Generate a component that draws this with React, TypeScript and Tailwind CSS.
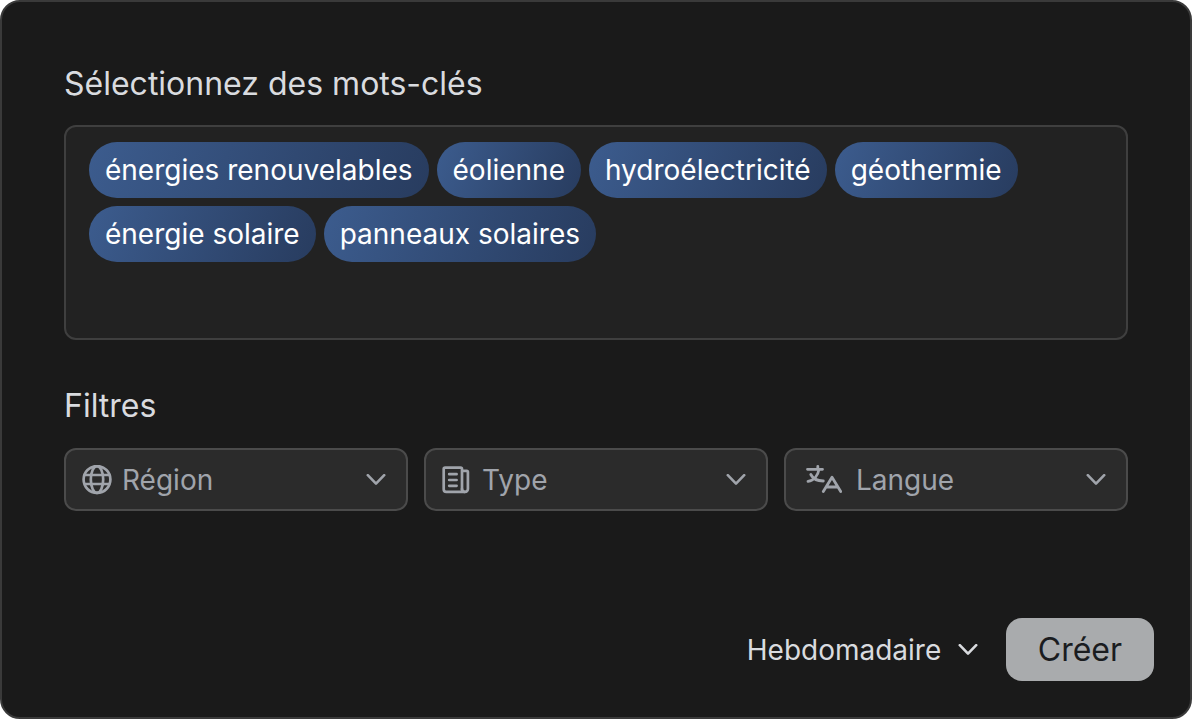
import { useState } from "react";
import type { ReactNode } from "react";

const KEYWORDS = [
  "énergies renouvelables",
  "éolienne",
  "hydroélectricité",
  "géothermie",
  "énergie solaire",
  "panneaux solaires",
];

function Chevron({ className }: { className: string }) {
  return (
    <svg
      className={className}
      width="20"
      height="12"
      viewBox="0 0 20 12"
      fill="none"
      stroke="currentColor"
      strokeWidth="2.6"
      strokeLinecap="round"
      strokeLinejoin="round"
      aria-hidden="true"
    >
      <path d="M1.8 1.2 L10 9.6 L18.2 1.2" />
    </svg>
  );
}

function GlobeIcon() {
  return (
    <svg width="30" height="30" viewBox="0 0 30 30" fill="none" stroke="currentColor" strokeWidth="2.7" aria-hidden="true">
      <circle cx="15" cy="14.5" r="13.4" />
      <ellipse cx="15" cy="14.5" rx="6.2" ry="13.4" />
      <path d="M2.4 10h25.2M2.4 19h25.2" />
    </svg>
  );
}

function NewsIcon() {
  return (
    <svg
      width="28"
      height="28"
      viewBox="0 0 28 28"
      fill="none"
      stroke="currentColor"
      strokeWidth="2.7"
      strokeLinecap="round"
      strokeLinejoin="round"
      aria-hidden="true"
    >
      <path d="M20 23.5V3.2a1.5 1.5 0 0 0-1.5-1.5H3.2a1.5 1.5 0 0 0-1.5 1.5v20a2.6 2.6 0 0 0 2.600 2.600h18.800a2.800 2.800 0 0 0 2.800-2.800V6a1.200 1.200 0 0 0-1.200-1.200H20" />
      <path d="M20 23c0 1.500.9 2.600 2.400 2.800" />
      <path d="M7.200 8.200h7.400M7.200 14h7.400M7.200 19.800h7.400" />
    </svg>
  );
}

function TranslateIcon() {
  return (
    <svg
      className="ml-1"
      width="36"
      height="30"
      viewBox="0 0 36 30"
      fill="none"
      stroke="currentColor"
      strokeWidth="2.8"
      strokeLinecap="round"
      strokeLinejoin="round"
      aria-hidden="true"
    >
      <path d="M1.5 4.300h15M11.800 1.500v2.800" />
      <path d="M13 4.300C12 10.500 8 15.500 2 16.300" />
      <path d="M4.800 9.500c2 4 6.500 6.500 12.500 6.500" />
      <path d="M17.300 26.500l8.700-14.300 8.700 14.300M21 22h10" />
    </svg>
  );
}

function FilterSelect({
  id,
  label,
  options,
  icon,
  padding,
}: {
  id: string;
  label: string;
  options: string[];
  icon: ReactNode;
  padding: string;
}) {
  return (
    <div className="relative min-w-0 flex-1 text-[#a0a4ab]">
      <select
        id={id}
        aria-label={label}
        className={`block h-[63px] w-full appearance-none rounded-xl border-2 border-[#4b4b4b] bg-[#2b2b2b] pr-12 text-[28px] outline-none ${padding}`}
      >
        <option>{label}</option>
        {options.map((option) => (
          <option key={option}>{option}</option>
        ))}
      </select>
      <span className="pointer-events-none absolute inset-y-0 left-[18px] flex items-center">{icon}</span>
      <Chevron className="pointer-events-none absolute top-1/2 right-[22px] -translate-y-1/2" />
    </div>
  );
}

export default function App() {
  const [draft, setDraft] = useState("");
  const [keywords, setKeywords] = useState(KEYWORDS);

  const addKeyword = () => {
    const word = draft.trim();
    if (word && !keywords.includes(word)) setKeywords([...keywords, word]);
    setDraft("");
  };

  return (
    <main className="min-h-screen bg-white pr-2 font-['Inter',sans-serif]">
      <form
        className="rounded-[20px] border-2 border-[#3a3a3a] bg-[#1a1a1a] pt-[61px] pb-9 text-[#d9dbdf]"
        onSubmit={(e) => e.preventDefault()}
      >
        <div className="px-[62px]">
          <label htmlFor="keyword" className="block text-[32px] leading-[42px]">
            Sélectionnez des mots-clés
          </label>
          <div className="mt-5 flex min-h-[215px] flex-wrap content-start gap-2 rounded-xl border-2 border-[#3f3f3f] bg-[#222222] px-[23px] py-[15px]">
            {keywords.map((word) => (
              <span
                key={word}
                className="rounded-full bg-linear-110 from-[#3c5c8e] to-[#283c5f] px-4 text-[28px] leading-14 text-white"
              >
                {word}
              </span>
            ))}
            <input
              id="keyword"
              className="h-14 min-w-20 flex-1 bg-transparent px-2 text-[28px] text-white outline-none"
              value={draft}
              onChange={(e) => setDraft(e.target.value)}
              onKeyDown={(e) => e.key === "Enter" && addKeyword()}
            />
          </div>

          <h2 className="mt-[42px] text-[32px] leading-12">Filtres</h2>
          <div className="mt-[18px] flex gap-4">
            <FilterSelect
              id="region"
              label="Région"
              options={["Europe", "Amérique", "Afrique", "Asie"]}
              icon={<GlobeIcon />}
              padding="pl-14"
            />
            <FilterSelect
              id="type"
              label="Type"
              options={["Article", "Étude", "Brevet"]}
              icon={<NewsIcon />}
              padding="pl-14"
            />
            <FilterSelect
              id="language"
              label="Langue"
              options={["Français", "Anglais", "Allemand"]}
              icon={<TranslateIcon />}
              padding="pl-[70px]"
            />
          </div>
        </div>

        {/* Frequency + submit */}
        <div className="mt-[107px] flex items-center justify-end gap-7 pr-9">
          <div className="relative">
            <select aria-label="Fréquence" className="block h-[63px] appearance-none pr-9 text-[28px] outline-none">
              <option>Hebdomadaire</option>
              <option>Quotidien</option>
              <option>Mensuel</option>
            </select>
            <Chevron className="pointer-events-none absolute top-1/2 right-0 -translate-y-1/2" />
          </div>
          <button type="submit" className="h-[63px] rounded-2xl bg-[#a9abad] px-8 text-[32px] text-[#1a1c1f]">
            Créer
          </button>
        </div>
      </form>
    </main>
  );
}
